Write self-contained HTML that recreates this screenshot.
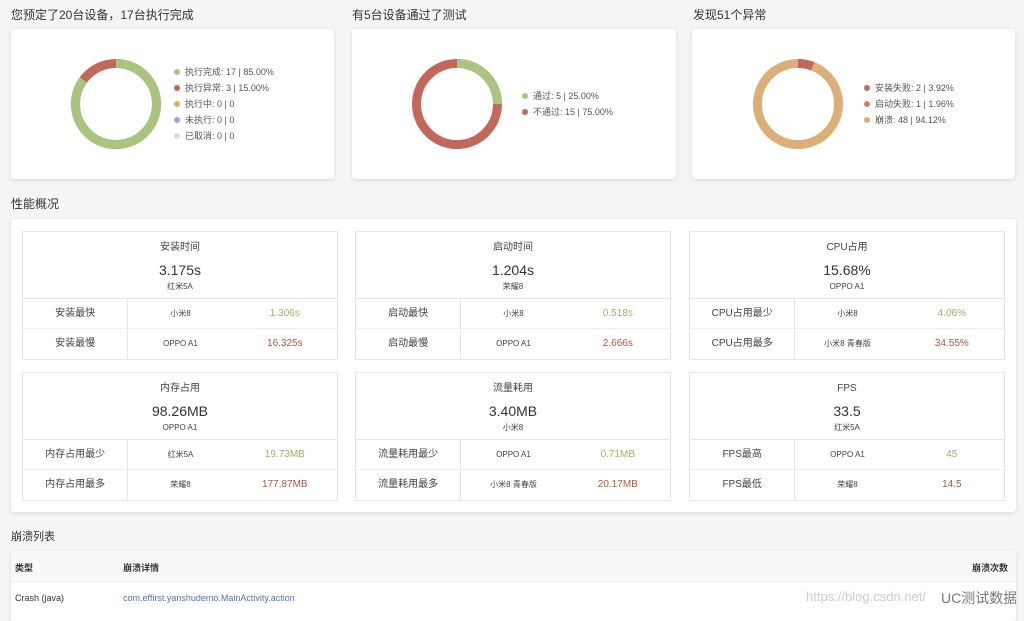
<!DOCTYPE html>
<html><head><meta charset="utf-8"><style>
*{margin:0;padding:0;box-sizing:border-box}
body{width:1024px;height:617px;background:#f4f5f7;font-family:"Liberation Sans","Noto Sans CJK SC",sans-serif;color:#333;position:relative;overflow:hidden}
.t{position:absolute;font-size:12px;color:#333;line-height:16px}
.card{position:absolute;background:#fff;border-radius:3px;box-shadow:0 1px 4px rgba(0,0,0,.12)}
.lg{position:absolute;font-size:9px;color:#555;line-height:16px}
.lg i{display:inline-block;width:6px;height:6px;border-radius:50%;margin-right:5px;vertical-align:0}
.box{position:absolute;width:316px;height:129px;border:1px solid #e6e6e6;font-size:10px;color:#444}
.box .h{height:67px;text-align:center;border-bottom:1px solid #e6e6e6;padding-top:9px}
.box .h div{line-height:14px;height:14px}
.box .h .a{font-size:10px}
.box .h .b{font-size:14px;color:#333;margin-top:7px;height:16px;line-height:16px}
.box .h .c{font-size:8px;margin-top:2px}
.row{height:30px;display:flex;align-items:center;border-bottom:1px solid #eee;line-height:30px}
.row:last-child{border-bottom:none}
.row span{text-align:center}
.row .l{width:106px;border-right:1px solid #e6e6e6;height:100%}
.row .m{width:105px;font-size:8px}
.row .v{width:105px}
.g{color:#9cb26a}.r{color:#b0563e}
</style></head><body>
<div class="t" style="left:11px;top:7px">您预定了20台设备，17台执行完成</div>
<div class="t" style="left:352px;top:7px">有5台设备通过了测试</div>
<div class="t" style="left:693px;top:7px">发现51个异常</div>

<div class="card" style="left:11px;top:29px;width:323px;height:150px"></div>
<div class="card" style="left:352px;top:29px;width:324px;height:150px"></div>
<div class="card" style="left:692px;top:29px;width:323px;height:150px"></div>

<svg style="position:absolute;left:0;top:0" width="1024" height="200">
<g transform="rotate(-90 116 104)" fill="none" stroke-width="9">
<circle cx="116" cy="104" r="40.5" stroke="#c2685a"/>
<circle cx="116" cy="104" r="40.5" stroke="#a8c47e" stroke-dasharray="216.3 300"/>
</g>
<g transform="rotate(-90 457 104)" fill="none" stroke-width="9">
<circle cx="457" cy="104" r="40.5" stroke="#c2685a"/>
<circle cx="457" cy="104" r="40.5" stroke="#a8c47e" stroke-dasharray="63.6 300"/>
</g>
<g transform="rotate(-90 798 104)" fill="none" stroke-width="9">
<circle cx="798" cy="104" r="40.5" stroke="#dcae78"/>
<circle cx="798" cy="104" r="40.5" stroke="#c2685a" stroke-dasharray="15 300"/>
</g>
</svg>

<div class="lg" style="left:174px;top:64px">
<div><i style="background:#a8c47e"></i>执行完成: 17 | 85.00%</div>
<div><i style="background:#c2685a"></i>执行异常: 3 | 15.00%</div>
<div><i style="background:#dcae78"></i>执行中: 0 | 0</div>
<div><i style="background:#9fa3d6"></i>未执行: 0 | 0</div>
<div><i style="background:#ddd"></i>已取消: 0 | 0</div>
</div>
<div class="lg" style="left:522px;top:88px">
<div><i style="background:#a8c47e"></i>通过: 5 | 25.00%</div>
<div><i style="background:#c2685a"></i>不通过: 15 | 75.00%</div>
</div>
<div class="lg" style="left:864px;top:80px">
<div><i style="background:#c2685a"></i>安装失败: 2 | 3.92%</div>
<div><i style="background:#d0805e"></i>启动失败: 1 | 1.96%</div>
<div><i style="background:#dcae78"></i>崩溃: 48 | 94.12%</div>
</div>

<div class="t" style="left:11px;top:196px">性能概况</div>
<div class="card" style="left:11px;top:219px;width:1005px;height:293px"></div>

<div class="box" style="left:22px;top:231px"><div class="h"><div class="a">安装时间</div><div class="b">3.175s</div><div class="c">红米5A</div></div>
<div class="row"><span class="l">安装最快</span><span class="m">小米8</span><span class="v g">1.306s</span></div>
<div class="row"><span class="l">安装最慢</span><span class="m">OPPO A1</span><span class="v r">16.325s</span></div></div>
<div class="box" style="left:355px;top:231px"><div class="h"><div class="a">启动时间</div><div class="b">1.204s</div><div class="c">荣耀8</div></div>
<div class="row"><span class="l">启动最快</span><span class="m">小米8</span><span class="v g">0.518s</span></div>
<div class="row"><span class="l">启动最慢</span><span class="m">OPPO A1</span><span class="v r">2.666s</span></div></div>
<div class="box" style="left:689px;top:231px"><div class="h"><div class="a">CPU占用</div><div class="b">15.68%</div><div class="c">OPPO A1</div></div>
<div class="row"><span class="l">CPU占用最少</span><span class="m">小米8</span><span class="v g">4.06%</span></div>
<div class="row"><span class="l">CPU占用最多</span><span class="m">小米8 青春版</span><span class="v r">34.55%</span></div></div>

<div class="box" style="left:22px;top:372px"><div class="h"><div class="a">内存占用</div><div class="b">98.26MB</div><div class="c">OPPO A1</div></div>
<div class="row"><span class="l">内存占用最少</span><span class="m">红米5A</span><span class="v g">19.73MB</span></div>
<div class="row"><span class="l">内存占用最多</span><span class="m">荣耀8</span><span class="v r">177.87MB</span></div></div>
<div class="box" style="left:355px;top:372px"><div class="h"><div class="a">流量耗用</div><div class="b">3.40MB</div><div class="c">小米8</div></div>
<div class="row"><span class="l">流量耗用最少</span><span class="m">OPPO A1</span><span class="v g">0.71MB</span></div>
<div class="row"><span class="l">流量耗用最多</span><span class="m">小米8 青春版</span><span class="v r">20.17MB</span></div></div>
<div class="box" style="left:689px;top:372px"><div class="h"><div class="a">FPS</div><div class="b">33.5</div><div class="c">红米5A</div></div>
<div class="row"><span class="l">FPS最高</span><span class="m">OPPO A1</span><span class="v g">45</span></div>
<div class="row"><span class="l">FPS最低</span><span class="m">荣耀8</span><span class="v r">14.5</span></div></div>

<div class="t" style="left:11px;top:529px;font-size:11px">崩溃列表</div>
<div class="card" style="left:11px;top:551px;width:1005px;height:70px;overflow:hidden">
<div style="height:31px;background:#f7f8fa;border-bottom:1px solid #eee;font-size:9px;font-weight:bold;position:relative">
<span style="position:absolute;left:4px;top:10px">类型</span>
<span style="position:absolute;left:112px;top:10px">崩溃详情</span>
<span style="position:absolute;right:8px;top:10px">崩溃次数</span></div>
<div style="position:relative;font-size:9px;white-space:nowrap">
<span style="position:absolute;left:4px;top:11px">Crash (java)</span>
<span style="position:absolute;left:112px;top:11px;color:#5a6fb0">com.effirst.yanshudemo.MainActivity.action</span>
<span style="position:absolute;left:795px;top:7px;color:#ccc;font-size:13px">https://blog.csdn.net/</span>
<span style="position:absolute;left:930px;top:6px;color:#777;font-size:14px">UC测试数据</span></div>
</div>
</body></html>
